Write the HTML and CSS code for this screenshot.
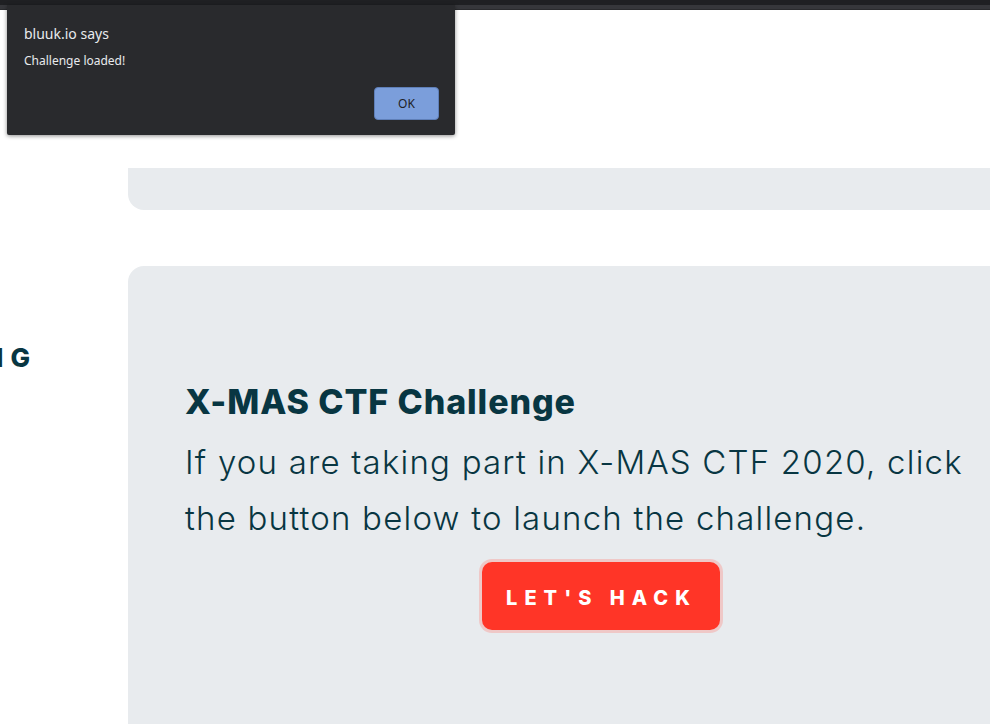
FILE: index.html
```html
<!DOCTYPE html>
<html lang="en">
<head>
<meta charset="utf-8">
<title>bluuk.io</title>
<link rel="stylesheet" href="styles.css">
</head>
<body>
<div class="chrome">
  <div class="chrome-top"></div>
  <div class="chrome-strip"></div>
</div>
<div class="page">
  <aside class="side">
    <div class="side-label"><span>TRAINING</span></div>
  </aside>
  <main class="main">
    <div class="card-top"></div>
    <section class="card">
      <div class="card-body">
        <h2 class="card-title">X-MAS CTF Challenge</h2>
        <p class="card-text">If you are taking part in X-MAS CTF 2020, click the button below to launch the challenge.</p>
        <div class="card-action">
          <button class="hack-btn" type="button">LET'S HACK</button>
        </div>
      </div>
    </section>
  </main>
</div>
<div class="dialog">
  <div class="dialog-title">bluuk.io says</div>
  <div class="dialog-msg">Challenge loaded!</div>
  <div class="dialog-actions">
    <button class="dialog-ok" type="button">OK</button>
  </div>
</div>
</body>
</html>
```

FILE: styles.css
```css
html, body {
  margin: 0;
  padding: 0;
}
body {
  width: 990px;
  height: 724px;
  overflow: hidden;
  background: #ffffff;
  font-family: "Inter", "Noto Sans", sans-serif;
  color: #083642;
  position: relative;
}
.chrome-top {
  height: 5px;
  background: #1f2023;
}
.chrome-strip {
  height: 4px;
  background: #36373b;
  border-bottom: 1px solid #2a2b2e;
}
.page {
  display: flex;
  width: 990px;
  overflow: hidden;
}
.side {
  width: 128px;
  flex: none;
  padding-top: 332px;
}
.side-label {
  width: 30px;
  overflow: hidden;
  display: flex;
  justify-content: flex-end;
  white-space: nowrap;
  font-weight: 800;
  font-size: 26px;
  letter-spacing: 7px;
  color: #083642;
}
.side-label span {
  margin-right: -7px;
}
.main {
  flex: none;
  width: 1000px;
  display: flex;
  flex-direction: column;
  gap: 56px;
  padding-top: 158px;
}
.card-top {
  height: 42px;
  background: #e8ebee;
  border-radius: 0 0 16px 16px;
}
.card {
  background: #e8ebee;
  border-radius: 16px 16px 0 0;
  height: 458px;
  padding: 114px 0 0 57px;
}
.card-body {
  width: 832px;
}
.card-title {
  margin: 0;
  font-size: 34px;
  font-weight: 800;
  line-height: 44px;
  color: #083642;
  letter-spacing: 0.9px;
}
.card-text {
  margin: 10px 0 0;
  font-size: 33px;
  font-weight: 300;
  line-height: 56px;
  letter-spacing: 1.2px;
  color: #083642;
  width: 800px;
}
.card-action {
  display: flex;
  justify-content: center;
  margin-top: 16px;
}
.hack-btn {
  background: #ff3527;
  color: #ffffff;
  border: none;
  border-radius: 10px;
  box-shadow: 0 0 0 3px rgba(255, 120, 110, 0.3);
  width: 238px;
  height: 68px;
  font-family: "Inter", "Noto Sans", sans-serif;
  font-weight: 800;
  font-size: 20px;
  letter-spacing: 7px;
  padding: 4px 0 0 1px;
}
.dialog {
  position: absolute;
  left: 7px;
  top: 5px;
  width: 448px;
  height: 130px;
  background: #292a2d;
  box-shadow: 0 1px 4px rgba(0, 0, 0, 0.45);
  border-radius: 0 0 2px 2px;
  color: #e8eaed;
  box-sizing: border-box;
  padding: 20px 16px 0 17px;
}
.dialog-title {
  font-family: "Noto Sans", sans-serif;
  font-size: 14px;
  line-height: 18px;
}
.dialog-msg {
  font-family: "Noto Sans", sans-serif;
  margin-top: 10px;
  font-size: 12px;
  line-height: 16px;
}
.dialog-actions {
  display: flex;
  justify-content: flex-end;
  margin-top: 18px;
}
.dialog-ok {
  width: 65px;
  height: 33px;
  background: #7b9edb;
  border: 1px solid #5f7fb8;
  border-radius: 4px;
  color: #202124;
  font-family: "Noto Sans", sans-serif;
  font-size: 12px;
  padding: 0;
}
```
